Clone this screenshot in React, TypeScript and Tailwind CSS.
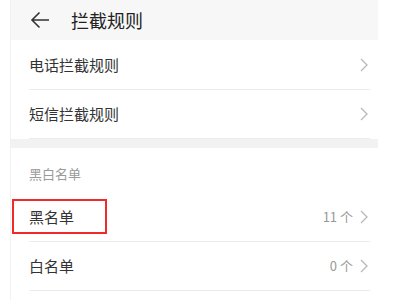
import React from 'react';

type RowProps = {
  label: string;
  count?: string;
  boxed?: boolean;
};

const Chevron: React.FC = () => (
  <svg width="8" height="14" viewBox="0 0 8 14" className="shrink-0">
    <path d="M1 1 L7 7 L1 13" fill="none" stroke="#b8b8b8" strokeWidth="1.3" />
  </svg>
);

const Row: React.FC<RowProps> = ({ label, count, boxed }) => {
  return (
    <div className="relative h-[49px] pl-[18px] pr-[8px]">
      <div className="flex h-[48px] items-center justify-between pr-[2px]">
        <span className="text-[15px] text-[#333]">{label}</span>
        <div className="flex items-center gap-[7px]">
          {count && <span className="text-[13px] text-[#999]">{count}</span>}
          <Chevron />
        </div>
      </div>
      <div className="h-px bg-[#ececec]" />
      {boxed && (
        <div className="absolute left-[1px] top-[6px] h-[35px] w-[95px] border-[2.5px] border-[#f02a2a]" />
      )}
    </div>
  );
};

export default function App() {
  return (
    <div
      className="h-[300px] w-[400px] overflow-hidden bg-white"
      style={{ fontFamily: '"Noto Sans CJK SC", "Noto Sans", sans-serif' }}
    >
      <div className="ml-[10px] h-full w-[368px] border-l border-[#f2f2f2]">
        <div className="flex h-[40px] items-center bg-[#f7f7f7] pl-[19px]">
          <svg width="20" height="18" viewBox="0 0 20 18">
            <path d="M19 9 H2 M9.5 1.5 L2 9 L9.5 16.5" fill="none" stroke="#333" strokeWidth="1.6" />
          </svg>
          <span className="ml-[21px] text-[18px] text-[#222]">拦截规则</span>
        </div>
        <div className="pt-px">
          <Row label="电话拦截规则" />
          <Row label="短信拦截规则" />
        </div>
        <div className="h-[9px] bg-[#f2f2f2]" />
        <div className="flex h-[45px] items-center pl-[18px] pt-[7px] text-[13px] text-[#9a9a9a]">黑白名单</div>
        <Row label="黑名单" count="11 个" boxed />
        <Row label="白名单" count="0 个" />
      </div>
    </div>
  );
}
